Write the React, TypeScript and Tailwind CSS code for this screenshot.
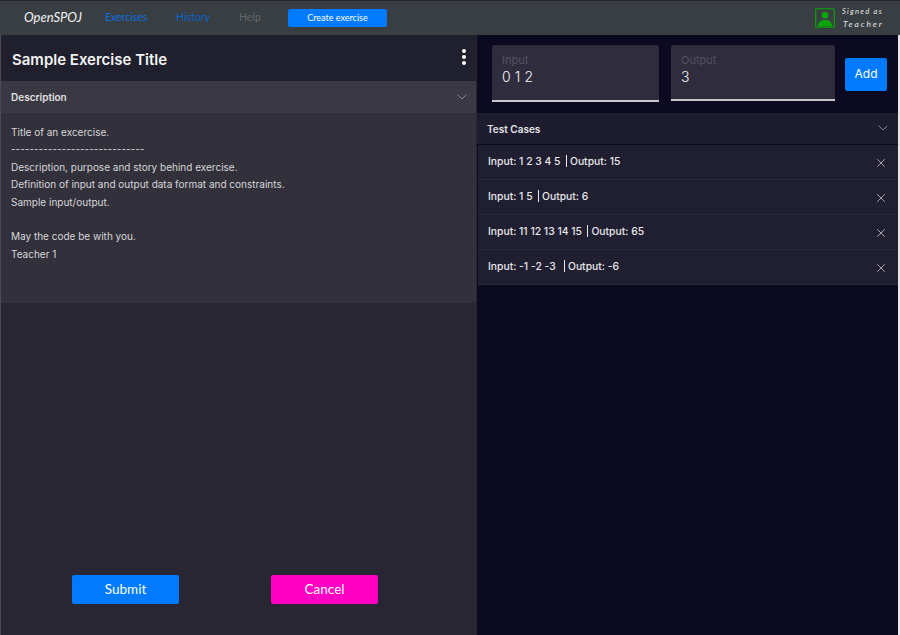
import { ChevronDown, X } from 'lucide-react'

const testCases = [
  { input: '1 2 3 4 5  ', output: '15' },
  { input: '1 5  ', output: '6' },
  { input: '11 12 13 14 15  ', output: '65' },
  { input: '-1 -2 -3   ', output: '-6' },
]

const lines = [
  'Title of an excercise.',
  '-----------------------------',
  'Description, purpose and story behind exercise.',
  'Definition of input and output data format and constraints.',
  'Sample input/output.',
  '\u00a0',
  'May the code be with you.',
  'Teacher 1',
]

const inter = "font-['Inter',sans-serif]"

function Field({ label, value, width, height }: { label: string; value: string; width: string; height: string }) {
  return (
    <div className={`${width} ${height} shrink-0 rounded-t-[3px] bg-[#2e2c3d] border-b-2 border-[#c8c8c8] pl-[10px] pt-[8px]`}>
      <div className="text-[11px] leading-[14px] text-[#55535f] font-['Inter',sans-serif]">{label}</div>
      <div className="text-[14px] leading-[20px] font-light text-[#f4f4f8] tracking-[0.1px] font-['Inter',sans-serif]">{value}</div>
    </div>
  )
}

export default function App() {
  return (
    <div className={`h-[635px] w-[900px] overflow-hidden flex flex-col bg-[#0b0a20] ${inter}`}>
      {/* top bar */}
      <header className="h-[35px] shrink-0 flex items-center border-t border-[#232528] bg-[#383e42] pl-[24px] pr-[15px]">
        <span className="w-[81px] text-[13px] italic text-[#f0f0f0] font-['Lato',sans-serif]">OpenSPOJ</span>
        <nav className="flex items-center text-[10.5px] font-['Lato',sans-serif]">
          <span className="w-[71px] text-[#0a6fe0]">Exercises</span>
          <span className="w-[63px] text-[#0a63c8]">History</span>
          <span className="w-[49px] text-[#62666a]">Help</span>
        </nav>
        <button className="h-[18px] w-[99px] rounded-[2px] bg-[#007bff] text-[9px] text-white font-['Lato',sans-serif]">Create exercise</button>
        <div className="ml-auto flex items-center gap-[7px]">
          <svg width="20" height="20" viewBox="0 0 21 21">
            <rect x="0.75" y="0.75" width="19.5" height="19.5" rx="1" fill="none" stroke="#0aa50a" strokeWidth="1.2" />
            <circle cx="10.5" cy="7.5" r="3.6" fill="#0aa50a" />
            <path d="M3 19.5c0-5 3.3-7 7.5-7s7.5 2 7.5 7z" fill="#0aa50a" />
          </svg>
          <div className="w-[43px] text-[7.5px] italic leading-[12px] tracking-[1.3px] text-[#e4e4e4] font-['Lato',sans-serif] whitespace-nowrap">
            <div>Signed as</div>
            <div className="pl-[1px] text-[8.5px] tracking-[1.85px]">Teacher</div>
          </div>
        </div>
      </header>

      <div className="flex flex-1 min-h-0">
        {/* left column */}
        <main className="w-[477px] shrink-0 flex flex-col border-l border-[#4a4a50] border-r border-r-[#272632] bg-[#272632]">
          <div className="h-[46px] shrink-0 flex items-center justify-between bg-[#201f2d] pl-[11px] pr-[10px]">
            <h1 className="mt-[5px] text-[15px] font-semibold text-[#f2f2f2]">Sample Exercise Title</h1>
            <div className="mb-[2px] flex flex-col gap-[2px]">
              <span className="size-[4px] rounded-full bg-white" />
              <span className="size-[4px] rounded-full bg-white" />
              <span className="size-[4px] rounded-full bg-white" />
            </div>
          </div>
          <div className="h-[32px] shrink-0 flex items-center justify-between bg-[#3a3943] pl-[10px] pr-[6px]">
            <span className="text-[10px] font-semibold text-[#e0e0e2]">Description</span>
            <ChevronDown size={16} strokeWidth={1.1} className="mb-[1px] text-[#a8a8ae]" />
          </div>
          <div className="h-[190px] shrink-0 bg-[#32313b] pl-[10px] pt-[11px] text-[10px] leading-[17.4px] text-[#d6d6d9]">
            {lines.map((line, i) => (
              <div key={i}>{line}</div>
            ))}
          </div>
          <div className="mt-auto flex gap-[92px] pb-[31px] pl-[71px] font-['Lato',sans-serif]">
            <button className="h-[29px] w-[107px] rounded-[2px] bg-[#007bff] text-[13.5px] text-white">Submit</button>
            <button className="h-[29px] w-[107px] rounded-[2px] bg-[#ff00c4] text-[13.5px] text-white">Cancel</button>
          </div>
        </main>

        {/* right column */}
        <section className="flex-1 flex flex-col border-r-2 border-[#e8e8e8]">
          <div className="h-[78px] shrink-0 flex items-start pl-[15px] pt-[10px]">
            <Field label="Input" value="0 1 2" width="w-[167px]" height="h-[57px]" />
            <div className="w-[12px] shrink-0" />
            <Field label="Output" value="3" width="w-[164px]" height="h-[56px]" />
            <button className="ml-[10px] mt-[13px] h-[33px] w-[42px] rounded-[2px] bg-[#007bff] pb-[2px] text-[12px] text-white">Add</button>
          </div>
          <div className="h-[31px] shrink-0 flex items-center justify-between bg-[#1e1d30] pl-[10px] pr-[7px]">
            <span className="mt-[2px] text-[10px] font-semibold text-[#e4e4e6]">Test Cases</span>
            <ChevronDown size={16} strokeWidth={1.1} className="mb-[1px] text-[#a8a8ae]" />
          </div>
          <div className="mt-[1px] ml-[1px] flex flex-col">
            {testCases.map((tc, i) => (
              <div key={i} className="h-[35px] flex items-start justify-between border-b border-[#2a2938] bg-[#201f31] pl-[10px] pr-[10px] pt-[9px]">
                <span className="text-[10.35px] leading-[14px] font-medium text-[#e8e8ea] whitespace-pre">
                  Input: {tc.input}<span className="border-l border-[#e8e8ea] pl-[3px]">Output: {tc.output}</span>
                </span>
                <X size={14} strokeWidth={1.2} className="mt-[2px] text-[#dcdcdc]" />
              </div>
            ))}
          </div>
        </section>
      </div>
    </div>
  )
}
